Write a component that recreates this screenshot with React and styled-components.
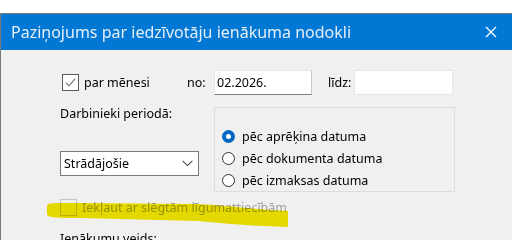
import React from 'react';
import styled, { createGlobalStyle } from 'styled-components';

const Global = createGlobalStyle`
  html, body { margin: 0; padding: 0; background: #ffffff; }
  body { font-family: "Noto Sans", "Open Sans", sans-serif; overflow: hidden; }
  * { box-sizing: border-box; }
`;

const Screen = styled.div`
  position: relative;
  width: 512px;
  height: 240px;
  padding-top: 13px;
  overflow: hidden;
  background: #ffffff;
`;

const Window = styled.div`
  height: 100%;
  border-top: 1px solid #7a7a7a;
  border-left: 1px solid #7a7a7a;
  background: #f0f0f0;
  display: flex;
  flex-direction: column;
`;

const TitleBar = styled.div`
  flex: none;
  height: 36px;
  background: #0078d4;
  display: flex;
  align-items: center;
  justify-content: space-between;
  padding: 0 15px 0 10px;
  color: #e6eef7;
  font-size: 16px;
  line-height: 20px;
`;

const Title = styled.span`
  white-space: nowrap;
  padding-bottom: 1px;
`;

const Content = styled.div`
  flex: 1;
  padding: 20px 0 0 58px;
  font-size: 12.5px;
  color: #000000;
`;

const TopRow = styled.div`
  display: grid;
  grid-template-columns: 128px 27px 98px 16px 26px 99px;
  align-items: center;
  height: 25px;
  line-height: 17px;
`;

const Check = styled.label`
  display: flex;
  align-items: center;
  gap: ${(p) => p.$gap || 5}px;
  margin-left: ${(p) => p.$indent || 0}px;
  color: ${(p) => (p.$disabled ? '#a0a0a0' : '#000000')};
  white-space: nowrap;
  line-height: 17px;
`;

const Box = styled.span`
  flex: none;
  width: 17px;
  height: 17px;
  border: 1px solid ${(p) => (p.$disabled ? '#c4c4c4' : '#5c5c5c')};
  background: ${(p) => (p.$disabled ? 'transparent' : '#ffffff')};
  display: flex;
  align-items: center;
  justify-content: center;
`;

const FieldLabel = styled.span`
  white-space: nowrap;
`;

const TextInput = styled.div`
  height: 25px;
  background: #ffffff;
  border: 1px solid #e6e6e6;
  border-bottom-color: ${(p) => (p.$focused ? '#7f7f7f' : '#e6e6e6')};
  border-right-color: ${(p) => (p.$focused ? '#c8c8c8' : '#e6e6e6')};
  padding: 0 2px;
  display: flex;
  align-items: center;
  line-height: 17px;
`;

const Middle = styled.div`
  display: flex;
  margin-top: 12px;
`;

const LeftCol = styled.div`
  width: 155px;
  display: flex;
  flex-direction: column;
`;

const PeriodLabel = styled.div`
  line-height: 14px;
  padding-left: 1px;
  white-space: nowrap;
`;

const Combo = styled.div`
  margin: 30px 0 0 1px;
  width: 139px;
  height: 25px;
  background: #ffffff;
  border: 1px solid #7a7a7a;
  display: flex;
  align-items: center;
  justify-content: space-between;
  padding: 0 5px 0 3px;
  line-height: 17px;
`;

const GroupBox = styled.div`
  width: 241px;
  height: 85px;
  border: 1px solid #dcdcdc;
  padding: 18px 0 0 7px;
  display: flex;
  flex-direction: column;
`;

const RadioRow = styled.label`
  height: 22px;
  display: flex;
  align-items: center;
  gap: 7px;
  line-height: 17px;
  white-space: nowrap;
`;

const RadioDot = styled.span`
  flex: none;
  width: 13px;
  height: 13px;
  border-radius: 50%;
  border: ${(p) => (p.$on ? '4px solid #0067c0' : '1px solid #333333')};
  background: #ffffff;
`;

const OptionRow = styled.div`
  margin-top: 7px;
  height: 17px;
  display: flex;
  align-items: center;
`;

const BottomLabel = styled.div`
  margin: 14px 0 0 1px;
  line-height: 17px;
  white-space: nowrap;
`;

const Highlight = styled.svg`
  position: absolute;
  left: 0;
  top: 0;
  width: 512px;
  height: 240px;
  pointer-events: none;
  mix-blend-mode: multiply;
`;

function CloseIcon() {
  return (
    <svg width="12" height="12" viewBox="0 0 12 12">
      <path d="M1 1 L11 11 M11 1 L1 11" stroke="#ffffff" strokeWidth="1.4" fill="none" />
    </svg>
  );
}

function CheckMark() {
  return (
    <svg width="13" height="13" viewBox="0 0 13 13">
      <path d="M2 6.8 L5 9.8 L11.2 2.6" stroke="#6b6b6b" strokeWidth="1.1" fill="none" />
    </svg>
  );
}

function Chevron() {
  return (
    <svg width="11" height="7" viewBox="0 0 11 7">
      <path d="M0.6 0.8 L5.5 5.6 L10.4 0.8" stroke="#444444" strokeWidth="1.1" fill="none" />
    </svg>
  );
}

export default function App() {
  return (
    <Screen>
      <Global />
      <Window>
        <TitleBar>
          <Title>Paziņojums par iedzīvotāju ienākuma nodokli</Title>
          <CloseIcon />
        </TitleBar>
        <Content>
          <TopRow>
            <Check $indent={3}>
              <Box>
                <CheckMark />
              </Box>
              par mēnesi
            </Check>
            <FieldLabel>no:</FieldLabel>
            <TextInput $focused>02.2026.</TextInput>
            <span />
            <FieldLabel>līdz:</FieldLabel>
            <TextInput />
          </TopRow>
          <Middle>
            <LeftCol>
              <PeriodLabel>Darbinieki periodā:</PeriodLabel>
              <Combo>
                <span>Strādājošie</span>
                <Chevron />
              </Combo>
            </LeftCol>
            <GroupBox>
              <RadioRow>
                <RadioDot $on />
                pēc aprēķina datuma
              </RadioRow>
              <RadioRow>
                <RadioDot />
                pēc dokumenta datuma
              </RadioRow>
              <RadioRow>
                <RadioDot />
                pēc izmaksas datuma
              </RadioRow>
            </GroupBox>
          </Middle>
          <OptionRow>
            <Check $indent={1} $gap={5} $disabled>
              <Box $disabled />
              Iekļaut ar slēgtām līgumattiecībām
            </Check>
          </OptionRow>
          <BottomLabel>Ienākumu veids:</BottomLabel>
        </Content>
      </Window>
      <Highlight viewBox="0 0 512 240">
        <path
          d="M47 206 C47 202 56 203 80 203 L195 204 C225 205 250 209 288 211 L288 227 C255 226 228 224 198 221 L80 218 C58 218 47 218 47 214 Z"
          fill="#f2e700"
        />
      </Highlight>
    </Screen>
  );
}
